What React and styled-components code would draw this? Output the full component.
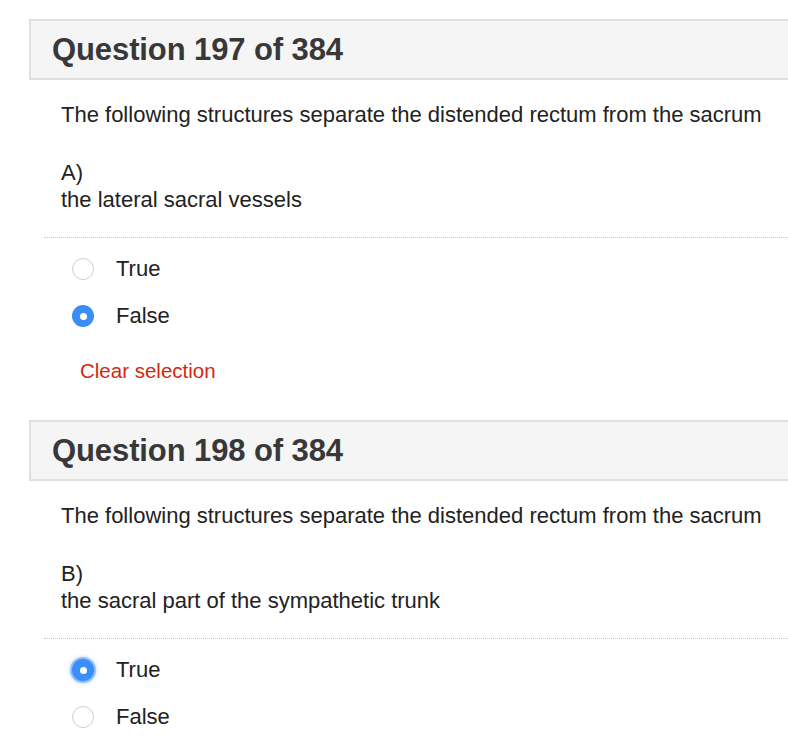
import React from "react";
import styled, { createGlobalStyle } from "styled-components";

const Global = createGlobalStyle`
  html, body { margin: 0; padding: 0; background: #fff; overflow: hidden; }
  body { font-family: "Liberation Sans", Arial, Helvetica, sans-serif; color: #222; }
`;

const Page = styled.div`
  width: 820px;
  padding: 19px 0 0 29px;
  box-sizing: border-box;
`;

const Question = styled.section`
  margin-bottom: 38px;
`;

const Header = styled.div`
  height: 61px;
  box-sizing: border-box;
  background: #f5f5f5;
  border: 2px solid #e0e0e0;
  border-right: none;
  display: flex;
  align-items: center;
  padding-left: 21px;
`;

const Title = styled.h2`
  margin: 0;
  font-size: 31px;
  font-weight: 700;
  color: #383838;
  letter-spacing: -0.1px;
`;

const Body = styled.div`
  padding-left: 15px;
`;

const Prompt = styled.div`
  padding: 21px 0 24px 17px;
  font-size: 22px;
  line-height: 27px;
  color: #222;
`;

const Stem = styled.p`
  margin: 0 0 31px;
`;

const Sep = styled.div`
  border-top: 1px dotted #c8c8c8;
`;

const Options = styled.div`
  padding: 20px 0 0 28px;
  display: flex;
  flex-direction: column;
  gap: 25px;
`;

const Option = styled.label`
  display: flex;
  align-items: center;
  gap: 22px;
  font-size: 22px;
  line-height: 22px;
  color: #222;
`;

const Radio = styled.span`
  width: 22px;
  height: 22px;
  box-sizing: border-box;
  border-radius: 50%;
  flex: none;
  display: flex;
  align-items: center;
  justify-content: center;
  border: ${(p) => (p.$checked ? "none" : "1.5px solid #cfcfcf")};
  background: ${(p) => (p.$checked ? "#3a8ef6" : "#fff")};
  box-shadow: ${(p) => (p.$focus ? "0 0 0 2px rgba(58,142,246,0.45), 0 0 4px 2px rgba(58,142,246,0.35)" : "none")};
  &::after {
    content: "";
    display: ${(p) => (p.$checked ? "block" : "none")};
    width: 7px;
    height: 7px;
    border-radius: 50%;
    background: #fff;
  }
`;

const Clear = styled.a`
  display: block;
  margin: 32px 0 0 36px;
  font-size: 20.5px;
  line-height: 23px;
  color: #d4270f;
  text-decoration: none;
`;

function Q({ num, letter, text, value, focus, clear }) {
  return (
    <Question>
      <Header>
        <Title>Question {num} of 384</Title>
      </Header>
      <Body>
        <Prompt>
          <Stem>The following structures separate the distended rectum from the sacrum</Stem>
          <div>{letter})</div>
          <div>{text}</div>
        </Prompt>
        <Sep />
        <Options>
          <Option>
            <Radio $checked={value === "True"} $focus={focus && value === "True"} />
            True
          </Option>
          <Option>
            <Radio $checked={value === "False"} $focus={focus && value === "False"} />
            False
          </Option>
        </Options>
        {clear && <Clear href="#">Clear selection</Clear>}
      </Body>
    </Question>
  );
}

export default function App() {
  return (
    <Page>
      <Global />
      <Q num={197} letter="A" text="the lateral sacral vessels" value="False" clear />
      <Q num={198} letter="B" text="the sacral part of the sympathetic trunk" value="True" focus />
    </Page>
  );
}
